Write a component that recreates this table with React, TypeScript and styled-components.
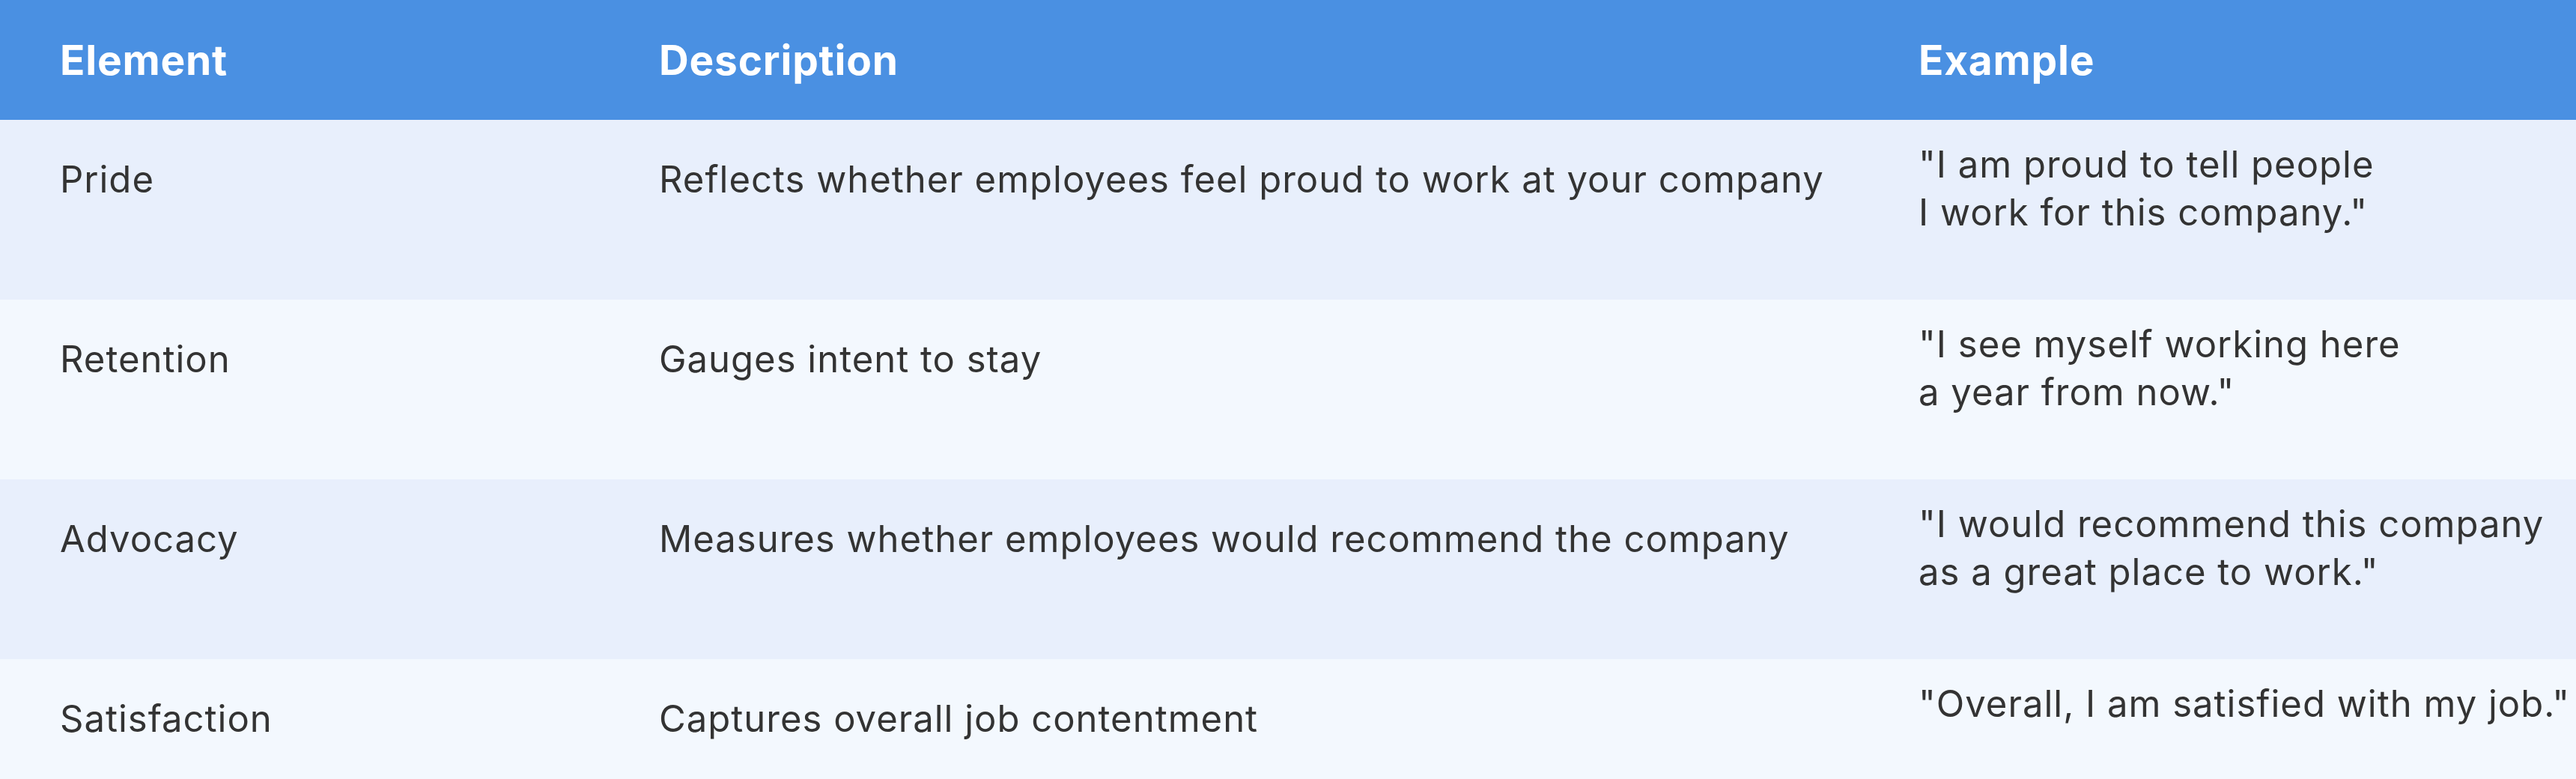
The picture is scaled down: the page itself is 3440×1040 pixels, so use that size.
import styled, { createGlobalStyle } from "styled-components";

const GlobalStyle = createGlobalStyle`
  * {
    box-sizing: border-box;
    margin: 0;
    padding: 0;
  }
  body {
    font-family: Inter, "Noto Sans", "Liberation Sans", sans-serif;
    background-color: #f3f8fe;
    color: #333333;
  }
`;

const rows = [
  {
    element: "Pride",
    description: "Reflects whether employees feel proud to work at your company",
    example: ['"I am proud to tell people', 'I work for this company."'],
  },
  {
    element: "Retention",
    description: "Gauges intent to stay",
    example: ['"I see myself working here', 'a year from now."'],
  },
  {
    element: "Advocacy",
    description: "Measures whether employees would recommend the company",
    example: ['"I would recommend this company', 'as a great place to work."'],
  },
  {
    element: "Satisfaction",
    description: "Captures overall job contentment",
    example: ['"Overall, I am satisfied with my job."'],
  },
];

function App() {
  return (
    <Table>
      <GlobalStyle />
      <HeaderRow>
        <HeaderCell>Element</HeaderCell>
        <HeaderCell>Description</HeaderCell>
        <HeaderCell>Example</HeaderCell>
      </HeaderRow>
      {rows.map((row, i) => (
        <Row key={row.element} $odd={i % 2 === 0}>
          <Cell>{row.element}</Cell>
          <Cell>{row.description}</Cell>
          <QuoteCell>
            {row.example.map((line) => (
              <Line key={line}>{line}</Line>
            ))}
          </QuoteCell>
        </Row>
      ))}
    </Table>
  );
}

const Table = styled.div`
  width: 100%;
  display: flex;
  flex-direction: column;
  font-size: 49px;
  line-height: 64px;
  letter-spacing: 1px;
`;

const HeaderRow = styled.div`
  display: grid;
  grid-template-columns: 800px 1682px 1fr;
  align-items: center;
  height: 160px;
  background-color: #4a90e2;
  color: #ffffff;
`;

const HeaderCell = styled.div`
  padding-left: 80px;
  font-size: 55px;
  font-weight: 700;
  letter-spacing: 0.8px;
`;

const Row = styled.div<{ $odd: boolean }>`
  display: grid;
  grid-template-columns: 800px 1682px 1fr;
  align-items: start;
  height: 240px;
  background-color: ${(p) => (p.$odd ? "#e8effc" : "#f3f8fe")};
`;

const Cell = styled.div`
  padding: 48px 0 0 80px;
  white-space: nowrap;
`;

const QuoteCell = styled.div`
  padding: 28px 0 0 80px;
  display: flex;
  flex-direction: column;
`;

const Line = styled.span`
  white-space: nowrap;
`;

export default App;
